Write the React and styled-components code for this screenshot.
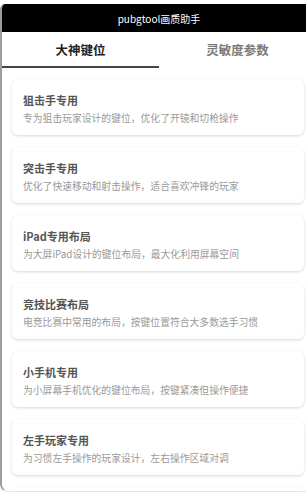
import React, { useState } from "react";
import styled, { createGlobalStyle } from "styled-components";

const Global = createGlobalStyle`
  html, body { margin: 0; padding: 0; background: #fff; overflow: hidden; }
  body { font-family: "Noto Sans CJK SC", "Noto Sans", sans-serif; }
  * { box-sizing: border-box; }
`;

const Frame = styled.div`
  margin-top: 4px;
  width: 316px;
  height: 488px;
  border-left: 2px solid #9c9c9c;
  border-bottom: 1px solid #e6e6e6;
  border-radius: 5px 0 0 8px;
  overflow: hidden;
  display: flex;
  flex-direction: column;
  background: #fff;
`;

const Header = styled.div`
  height: 28px;
  background: #000;
  color: #fff;
  font-size: 10px;
  display: flex;
  align-items: center;
  justify-content: center;
  flex-shrink: 0;
`;

const Tabs = styled.div`
  display: flex;
  height: 36px;
  flex-shrink: 0;
`;

const Tab = styled.div`
  flex: 1;
  display: flex;
  align-items: center;
  justify-content: center;
  font-size: 12.5px;
  font-weight: 700;
  color: ${(p) => (p.$active ? "#1e1e1e" : "#7a7a7a")};
  border-bottom: 2px solid ${(p) => (p.$active ? "#444" : "transparent")};
  padding-top: 1px;
`;

const List = styled.div`
  display: flex;
  flex-direction: column;
  gap: 12px;
  padding: 11px 12px 0 10px;
`;

const Card = styled.div`
  flex-shrink: 0;
  background: #fff;
  border-radius: 6px;
  box-shadow: 0 1px 3px rgba(0, 0, 0, 0.16);
  padding: 13px 11px 9px;
  height: 56px;
`;

const Title = styled.div`
  font-size: 11px;
  font-weight: 600;
  line-height: 16px;
  color: #555;
  margin-bottom: 3px;
`;

const Desc = styled.div`
  font-size: 9.8px;
  line-height: 14px;
  color: #999;
  white-space: nowrap;
`;

const items = [
  ["狙击手专用", "专为狙击玩家设计的键位，优化了开镜和切枪操作"],
  ["突击手专用", "优化了快速移动和射击操作，适合喜欢冲锋的玩家"],
  ["iPad专用布局", "为大屏iPad设计的键位布局，最大化利用屏幕空间"],
  ["竞技比赛布局", "电竞比赛中常用的布局，按键位置符合大多数选手习惯"],
  ["小手机专用", "为小屏幕手机优化的键位布局，按键紧凑但操作便捷"],
  ["左手玩家专用", "为习惯左手操作的玩家设计，左右操作区域对调"],
  ["", ""],
];

export default function App() {
  const [tab, setTab] = useState(0);
  return (
    <>
      <Global />
      <Frame>
        <Header>pubgtool画质助手</Header>
        <Tabs>
          <Tab $active={tab === 0} onClick={() => setTab(0)}>大神键位</Tab>
          <Tab $active={tab === 1} onClick={() => setTab(1)}>灵敏度参数</Tab>
        </Tabs>
        <List>
          {items.map(([t, d], i) => (
            <Card key={i}>
              <Title>{t}</Title>
              <Desc>{d}</Desc>
            </Card>
          ))}
        </List>
      </Frame>
    </>
  );
}
